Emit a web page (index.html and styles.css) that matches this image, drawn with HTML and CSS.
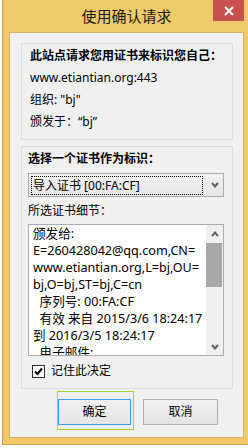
FILE: index.html
```html
<!DOCTYPE html>
<html lang="zh-CN">
<head>
    <meta charset="UTF-8">
    <meta name="viewport" content="width=device-width, initial-scale=1.0">
    <title>使用确认请求</title>
    <link rel="stylesheet" href="styles.css">
</head>
<body>

<div class="window">
    <div class="titlebar">
        <span class="title">使用确认请求</span>
        <span class="close">
            <svg width="10" height="10" viewBox="0 0 10 10"><path d="M1 1 L9 9 M9 1 L1 9" stroke="#fff" stroke-width="2" fill="none"/></svg>
        </span>
    </div>

    <div class="client">
        <div class="group group-site">
            <p class="bold">此站点请求您用证书来标识您自己：</p>
            <p>www.etiantian.org:443</p>
            <p>组织: "bj"</p>
            <p>颁发于：“bj”</p>
        </div>

        <div class="group group-cert">
            <p class="bold">选择一个证书作为标识：</p>
            <div class="select">
                <span class="select-text">导入证书 [00:FA:CF]</span>
                <svg class="chevron" width="8" height="6" viewBox="0 0 8 6"><path d="M1 1 L4 4.5 L7 1" stroke="#606060" stroke-width="2" fill="none"/></svg>
            </div>
            <p class="label">所选证书细节：</p>
            <div class="details">
                <div class="details-text">
                    <div>颁发给:</div>
                    <div>E=260428042@qq.com,CN=</div>
                    <div>www.etiantian.org,L=bj,OU=</div>
                    <div>bj,O=bj,ST=bj,C=cn</div>
                    <div>  序列号: 00:FA:CF</div>
                    <div>  有效 来自 2015/3/6 18:24:17</div>
                    <div>到 2016/3/5 18:24:17</div>
                    <div>  电子邮件:</div>
                </div>
                <div class="scrollbar">
                    <div class="arrow">
                        <svg width="8" height="6" viewBox="0 0 8 6"><path d="M1 5 L4 1.5 L7 5" stroke="#606060" stroke-width="2" fill="none"/></svg>
                    </div>
                    <div class="track"><div class="thumb"></div></div>
                    <div class="arrow">
                        <svg width="8" height="6" viewBox="0 0 8 6"><path d="M1 1 L4 4.5 L7 1" stroke="#606060" stroke-width="2" fill="none"/></svg>
                    </div>
                </div>
            </div>
            <div class="remember">
                <span class="checkbox">
                    <svg width="11" height="11" viewBox="0 0 11 11"><path d="M2 5.5 L4.5 8 L9 2.5" stroke="#000" stroke-width="2" fill="none"/></svg>
                </span>
                <span class="remember-label">记住此决定</span>
            </div>
        </div>

        <div class="buttons">
            <span class="focus-ring"><button class="button button-default">确定</button></span>
            <button class="button">取消</button>
        </div>
    </div>
</div>

</body>
</html>
```

FILE: styles.css
```css
body { margin: 0; padding: 0; background: #fff; font-family: "Noto Sans", "Noto Sans CJK SC", sans-serif; font-size: 12px; line-height: 16px; color: #000; }
p { margin: 0; }

.window { position: relative; margin-left: 2px; width: 246px; height: 445px; box-sizing: border-box; background: #f0c96b; border-left: 1px solid #c9a14e; border-bottom: 1px solid #c9a14e; padding: 0 4px 6px 6px; }
.titlebar { height: 32px; display: flex; align-items: center; justify-content: center; }
.title { font-size: 15px; line-height: 20px; color: #1a1a1a; margin-top: -1px; }
.close { position: absolute; top: 0; left: 210px; width: 31px; height: 21px; background: #c75050; display: flex; align-items: center; justify-content: center; }

.client { height: 406px; box-sizing: border-box; background: #f0f0f0; border: 1px solid #d4b066; padding: 10px 10px 7px 11px; }

.group { border: 1px solid #dcdcdc; }
.group p { line-height: 22px; white-space: nowrap; }
.bold { font-weight: bold; }
.group-site { padding: 1px 4px 6px 8px; }
.group-cert { margin-top: 6px; padding: 1px 8px 8px 6px; }

.select { margin-top: 3px; height: 24px; box-sizing: border-box; border: 1px solid #acacac; background: linear-gradient(#f2f2f2, #e5e5e5); display: flex; align-items: center; padding: 0 4px 0 2px; }
.select-text { width: 172px; height: 19px; box-sizing: border-box; border: 1px dotted #000; padding-left: 1px; line-height: 17px; white-space: nowrap; font-size: 12px; }
.chevron { margin-left: 8px; }

.label { margin-top: 3px; }

.details { margin-top: 2px; height: 132px; box-sizing: border-box; border: 1px solid #abadb3; background: #fff; display: flex; overflow: hidden; }
.details-text { flex: 1; padding: 0 0 0 4px; font-size: 12.6px; line-height: 17px; overflow: hidden; }
.details-text div { white-space: pre; height: 17px; }
.scrollbar { width: 17px; background: #f0f0f0; display: flex; flex-direction: column; }
.arrow { height: 17px; display: flex; align-items: center; justify-content: center; }
.track { flex: 1; }
.thumb { margin: 1px 1px 0 0; height: 44px; background: #a8a8a8; }

.remember { margin-top: 6px; height: 18px; display: flex; align-items: center; padding-left: 4px; }
.remember-label { line-height: 18px; }
.checkbox { width: 13px; height: 13px; box-sizing: border-box; border: 1px solid #333; background: #fff; display: flex; align-items: center; justify-content: center; margin-right: 6px; }

.buttons { margin-top: 2px; display: flex; justify-content: flex-end; align-items: flex-start; gap: 9px; padding-right: 15px; }
.focus-ring { border: 1px solid #a6d22b; padding: 7px 2px 4px 0; display: flex; }
.button { width: 75px; height: 26px; margin: 0; padding: 0; border: 1px solid #acacac; background: linear-gradient(#f0f0f0, #e5e5e5); font-family: "Noto Sans", "Noto Sans CJK SC", sans-serif; font-size: 12px; line-height: 16px; color: #000; }
.focus-ring .button { width: 73px; border-color: #3c9be9; }
.buttons > .button { margin-top: 8px; }
```
